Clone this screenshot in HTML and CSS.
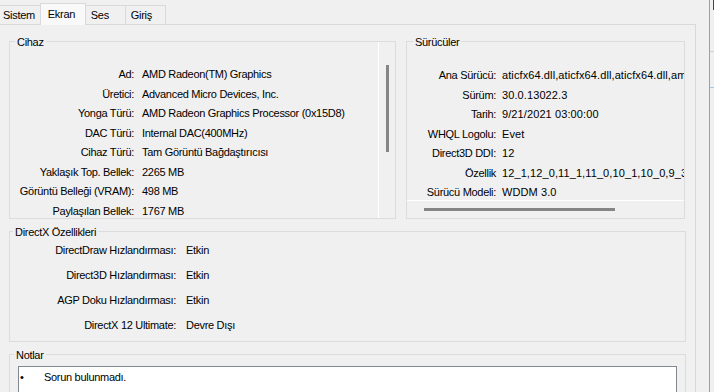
FILE: index.html
```html
<!DOCTYPE html>
<html lang="tr">
<head>
  <meta charset="UTF-8">
  <title>DirectX Tanı Aracı - Ekran</title>
  <link rel="stylesheet" href="styles.css">
</head>
<body>

<div class="window">
  <div class="dialog">
    <div class="tabs">
      <div class="tab">Sistem</div>
      <div class="tab active">Ekran</div>
      <div class="tab">Ses</div>
      <div class="tab">Giriş</div>
    </div>

    <div class="panel">
      <div class="top-row">
        <!-- Cihaz -->
        <div class="group device">
          <span class="group-title">Cihaz</span>
          <div class="scroll-v">
            <div class="rows device-rows">
              <span class="key">Ad:</span><span>AMD Radeon(TM) Graphics</span>
              <span class="key">Üretici:</span><span>Advanced Micro Devices, Inc.</span>
              <span class="key">Yonga Türü:</span><span>AMD Radeon Graphics Processor (0x15D8)</span>
              <span class="key">DAC Türü:</span><span>Internal DAC(400MHz)</span>
              <span class="key">Cihaz Türü:</span><span>Tam Görüntü Bağdaştırıcısı</span>
              <span class="key">Yaklaşık Top. Bellek:</span><span>2265 MB</span>
              <span class="key">Görüntü Belleği (VRAM):</span><span>498 MB</span>
              <span class="key">Paylaşılan Bellek:</span><span>1767 MB</span>
            </div>
            <div class="vbar"><div class="vthumb"></div></div>
          </div>
        </div>

        <!-- Sürücüler -->
        <div class="group drivers">
          <span class="group-title">Sürücüler</span>
          <div class="rows driver-rows">
            <span class="key">Ana Sürücü:</span><span class="val">aticfx64.dll,aticfx64.dll,aticfx64.dll,amdxc64.dll</span>
            <span class="key">Sürüm:</span><span class="val">30.0.13022.3</span>
            <span class="key">Tarih:</span><span class="val">9/21/2021 03:00:00</span>
            <span class="key">WHQL Logolu:</span><span class="val">Evet</span>
            <span class="key">Direct3D DDI:</span><span class="val">12</span>
            <span class="key">Özellik</span><span class="val">12_1,12_0,11_1,11_0,10_1,10_0,9_3,9_2,9_1</span>
            <span class="key">Sürücü Modeli:</span><span class="val">WDDM 3.0</span>
          </div>
          <div class="hbar"><div class="hthumb"></div></div>
        </div>
      </div>

      <!-- DirectX Özellikleri -->
      <div class="group features">
        <span class="group-title">DirectX Özellikleri</span>
        <div class="rows feature-rows">
          <span class="key">DirectDraw Hızlandırması:</span><span>Etkin</span>
          <span class="key">Direct3D Hızlandırması:</span><span>Etkin</span>
          <span class="key">AGP Doku Hızlandırması:</span><span>Etkin</span>
          <span class="key">DirectX 12 Ultimate:</span><span>Devre Dışı</span>
        </div>
      </div>

      <!-- Notlar -->
      <div class="group notes">
        <span class="group-title">Notlar</span>
        <div class="notes-box">
          <ul>
            <li><span class="bullet">•</span>Sorun bulunmadı.</li>
          </ul>
        </div>
      </div>
    </div>
  </div>

  <div class="edge">
    <div class="edge-top"></div>
    <div class="edge-line"></div>
    <div class="edge-line blue"></div>
  </div>
</div>

</body>
</html>
```

FILE: styles.css
```css
body {
  margin: 0;
  background: #f0f0f0;
  font-family: "Liberation Sans", Arial, sans-serif;
  font-size: 11px;
  letter-spacing: -0.3px;
  color: #000;
  overflow: hidden;
}

.window {
  display: flex;
  height: 392px;
  overflow: hidden;
}

.dialog {
  flex: none;
  width: 712px;
  margin-left: -3px;
}

/* sekmeler */
.tabs {
  display: flex;
  align-items: flex-end;
  height: 24px;
}
.tab {
  box-sizing: border-box;
  height: 19px;
  line-height: 18px;
  min-width: 41px;
  padding: 0 5px;
  margin-right: -1px;
  border: 1px solid #d9d9d9;
  border-bottom: 0;
  background: #f0f0f0;
}
.tab.active {
  position: relative;
  z-index: 1;
  height: 22px;
  line-height: 20px;
  min-width: 46px;
  padding-left: 7px;
  margin-bottom: -1px;
  background: #f9f9f9;
}

.panel {
  box-sizing: border-box;
  width: 699px;
  height: 368px;
  padding: 16px 0 0 12px;
  border-top: 1px solid #d9d9d9;
  border-right: 1px solid #d9d9d9;
}

.top-row {
  display: flex;
  gap: 10px;
}

/* grup kutuları */
.group {
  position: relative;
  box-sizing: border-box;
  border: 1px solid #dcdcdc;
}
.group-title {
  position: absolute;
  top: -6px;
  left: 5px;
  padding: 0 2px;
  line-height: 13px;
  background: #f0f0f0;
}
.device {
  width: 387px;
  height: 178px;
}
.drivers {
  width: 279px;
  height: 178px;
  display: flex;
  flex-direction: column;
}
.drivers .group-title {
  left: 6px;
}
.features {
  width: 677px;
  height: 111px;
  margin-top: 12px;
}
.features .group-title {
  left: 3px;
}
.notes {
  width: 677px;
  height: 50px;
  margin-top: 12px;
}
.notes .group-title {
  left: 4px;
}

.rows {
  display: grid;
  align-content: start;
  white-space: nowrap;
  line-height: 19.5px;
  overflow: hidden;
}
.key {
  text-align: right;
}

.scroll-v {
  display: flex;
  height: 100%;
}
.device-rows {
  flex: 1;
  grid-template-columns: 124px auto;
  column-gap: 8px;
  padding-top: 23px;
}
.vbar {
  flex: none;
  width: 16px;
  border-left: 1px solid #fff;
}
.vthumb {
  width: 3px;
  height: 87px;
  margin: 23px 0 0 7px;
  background: #858585;
}

.driver-rows {
  height: 158px;
  box-sizing: border-box;
  grid-template-columns: 89px auto;
  column-gap: 6px;
  padding-top: 24px;
}
.driver-rows .val {
  letter-spacing: 0.1px;
}
.hbar {
  flex: 1;
  border-top: 1px solid #fff;
}
.hthumb {
  width: 191px;
  height: 3px;
  margin: 7px 0 0 17px;
  background: #858585;
}

.feature-rows {
  grid-template-columns: 166px auto;
  column-gap: 10px;
  padding-top: 6px;
  line-height: 25px;
}

/* notlar */
.notes-box {
  height: 40px;
  margin: 11px 8px 0 8px;
  background: #fff;
  border: 1px solid #828790;
}
.notes-box ul {
  list-style: none;
  margin: 0;
  padding: 4px 0 0 1px;
}
.notes-box li {
  display: flex;
  line-height: 13px;
}
.bullet {
  width: 24px;
}

/* arkadaki pencerenin kenarı */
.edge {
  flex: 1;
  border-left: 1px solid #a0a0a0;
  background: #f0f0f0;
}
.edge-top {
  height: 10px;
  margin-left: 3px;
  background: #1f4e79;
}
.edge-line {
  margin-top: 41px;
  border-top: 1px solid #cfcfcf;
}
.edge-line.blue {
  margin-top: 35px;
  border-top-color: #a9c4e4;
}
```
